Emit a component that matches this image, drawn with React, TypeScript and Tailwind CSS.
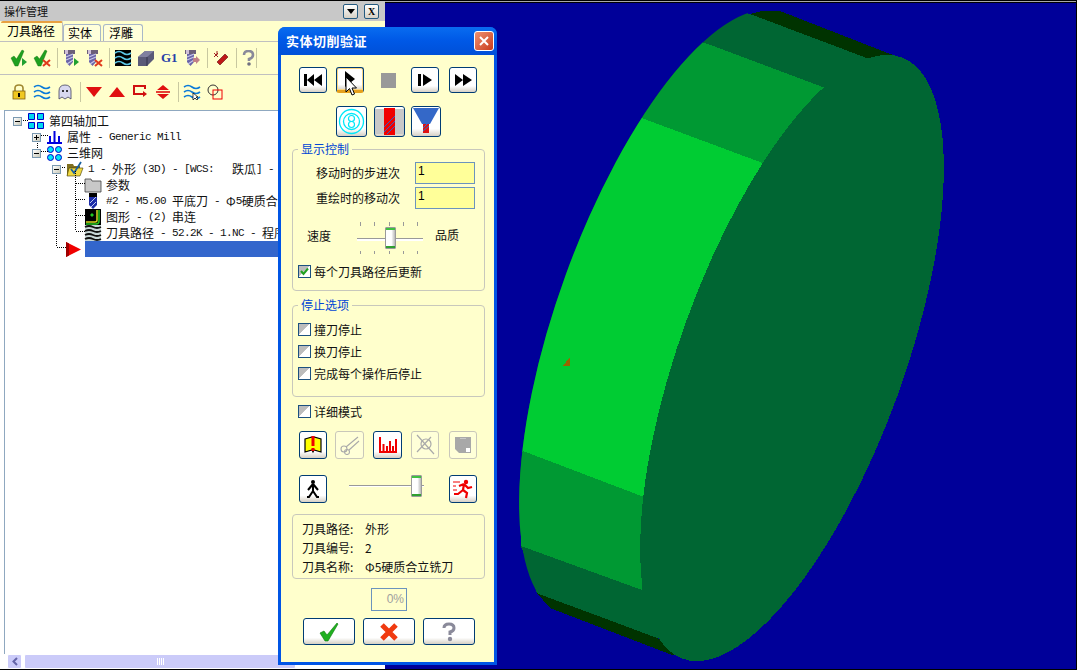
import React from "react";

const Mixed = ({ text }: { text: string }) => (
  <div className="flex whitespace-pre">
    {text.split(/([\x00-\x7f]+)/).map((part, i) =>
      /^[\x00-\x7f]+$/.test(part) ? (
        <div key={i} className="h-4 leading-4 font-['Liberation_Mono',monospace] text-[11px] tracking-[-0.6px]">{part}</div>
      ) : (
        <div key={i} className="h-4 leading-4">{part}</div>
      )
    )}
  </div>
);

const Ico = ({ children, className = "" }: { children: React.ReactNode; className?: string }) => (
  <svg viewBox="0 0 16 16" className={`w-4 h-4 shrink-0 overflow-visible ${className}`}>{children}</svg>
);

const Sep = () => <div className="w-px h-[20px] bg-[#c8c8a0] mr-[5px] shrink-0" />;

const Check = () => <path d="M0 8 L3 6 L5.5 9 L11 0 L13 1 L7 16 L4 16 Z" fill="#1fa01f" stroke="#0b6b0b" strokeWidth="0.4" />;
const RedX = ({ x = 9, y = 10 }: { x?: number; y?: number }) => (
  <path d={`M${x} ${y} l7 6 M${x + 7} ${y} l-7 6`} stroke="#e03a1c" strokeWidth="2" />
);
const Mill = () => (
  <g>
    <rect x="1" y="0" width="11" height="4" fill="#6b5f78" />
    <rect x="2" y="0" width="3" height="4" fill="#d0c0d8" />
    <path d="M3 4 H10 V12 L6.5 16 L3 12 Z" fill="#6a64a8" />
    <path d="M3 7 L10 4 M3 10 L10 7 M4 14 L10 10" stroke="#c8c8e8" strokeWidth="1.2" />
  </g>
);
const Waves = ({ color = "#0a7ad8" }: { color?: string }) => (
  <path d="M0 3 Q4 0 8 3 T16 3 M0 8 Q4 5 8 8 T16 8 M0 13 Q4 10 8 13 T16 13" stroke={color} strokeWidth="1.6" fill="none" />
);
const Cursor = ({ className }: { className?: string }) => (
  <svg viewBox="0 0 12 21" className={className}>
    <path d="M1 1 V16 L4.5 12.5 L7 19 L9.5 18 L7 12 H11.5 Z" fill="#fff" stroke="#000" strokeWidth="1" />
  </svg>
);

const Expander = ({ open }: { open: boolean }) => (
  <div className="w-[9px] h-[9px] shrink-0 border border-[#7a98b0] bg-linear-to-br from-white to-[#c8c8b8] relative flex items-center justify-center">
    <div className="w-[5px] h-px bg-black" />
    {!open && <div className="absolute w-px h-[5px] bg-black" />}
  </div>
);

const TreeRow = ({ pad, expander, icon, text }: { pad: string; expander?: "open" | "closed"; icon: React.ReactNode; text: string }) => (
  <div className={`h-4 flex items-center ${pad}`}>
    {expander && <Expander open={expander === "open"} />}
    {expander && <div className="w-[6px] shrink-0" />}
    {icon}
    <div className="ml-[5px] text-[12px] leading-4 text-[#111]"><Mixed text={text} /></div>
  </div>
);

const Btn = ({ className = "", children, disabled }: { className?: string; children?: React.ReactNode; disabled?: boolean }) => (
  <div
    className={`flex items-center justify-center rounded-[3px] shrink-0 border relative ${
      disabled
        ? "border-[#c9c7ba] bg-[#ffffd8]"
        : "border-[#003c74] bg-linear-to-b from-white from-75% to-[#d6d0c5]"
    } ${className}`}
  >
    {children}
  </div>
);

const CheckBox = ({ checked }: { checked?: boolean }) => (
  <div className="w-[13px] h-[13px] shrink-0 border border-[#1c5180] bg-linear-to-br from-[#bcbcbc] from-45% to-white to-50% flex items-center justify-center">
    {checked && (
      <svg viewBox="0 0 11 11" className="w-[11px] h-[11px]">
        <path d="M2 5 L4.5 8 L9 2.5" stroke="#21a121" strokeWidth="2" fill="none" />
      </svg>
    )}
  </div>
);

const Check2 = ({ label, className = "" }: { label: string; className?: string }) => (
  <div className={`flex items-center h-[13px] ${className}`}>
    <CheckBox checked={label.startsWith("每个")} />
    <span className="ml-[3px] text-[12px] text-[#111] whitespace-nowrap">{label}</span>
  </div>
);

const Thumb = ({ className = "" }: { className?: string }) => (
  <div className={`absolute w-[11px] h-[22px] rounded-[1px] border border-[#9a9a9a] bg-linear-to-r from-white from-60% to-[#b8b8b8] ${className}`}>
    <div className="h-[2px] bg-[#40c040]" />
    <div className="h-[2px] bg-[#30a030] absolute bottom-0 left-0 right-0" />
  </div>
);

const Group = ({ label, className = "", children }: { label?: string; className?: string; children: React.ReactNode }) => (
  <div className={`relative ml-[11px] w-[193px] rounded-[4px] border border-[#c8c8bc] shrink-0 ${className}`}>
    {label && (
      <span className="absolute -top-[7px] left-[5px] px-[3px] leading-3 text-[12px] text-[#0046d5] bg-[#ffffcc]">{label}</span>
    )}
    {children}
  </div>
);

const InfoRow = ({ k, v }: { k: string; v: string }) => (
  <div className="flex items-center h-[19px] text-[12px] text-[#111]">
    <span className="w-[63px] whitespace-nowrap">{k}</span>
    <span className="whitespace-nowrap">{v}</span>
  </div>
);

const Dialog = () => (
  <div className="absolute left-[278px] top-[27px] w-[219px] h-[638px] flex flex-col rounded-t-[7px] bg-[#0055e5] overflow-hidden">
    <div className="h-[28px] shrink-0 flex items-center pl-[8px] pr-[3px] bg-linear-to-b from-[#0a6cf0] via-[#0058e6] to-[#0050d8]">
      <span className="text-white font-bold text-[13px] tracking-[0.5px]">实体切削验证</span>
      <div className="ml-auto w-[20px] h-[20px] rounded-[3px] border border-white bg-linear-to-br from-[#ee9070] to-[#c83818] flex items-center justify-center">
        <svg viewBox="0 0 12 12" className="w-3 h-3"><path d="M2 2 L10 10 M10 2 L2 10" stroke="#fff" strokeWidth="2" /></svg>
      </div>
    </div>
    <div className="flex-1 mx-[3px] mb-[3px] bg-[#ffffcc] flex flex-col">
      <div className="flex items-center mt-[12px] pl-[18px] h-[26px] shrink-0">
        <Btn className="w-[28px] h-[26px]">
          <svg viewBox="0 0 18 12" className="w-[18px] h-3"><path d="M0 0 H3 V12 H0 Z M10 0 V12 L3 6 Z M18 0 V12 L10 6 Z" fill="#000" /></svg>
        </Btn>
        <Btn className="w-[28px] h-[26px] ml-[9px] border-b-[3px] border-b-[#e5a01c] shadow-[inset_0_0_0_1px_#fbd580]">
          <svg viewBox="0 0 12 16" className="w-3 h-4"><path d="M1 0 L11 8 L1 16 Z" fill="#000" /></svg>
          <Cursor className="absolute left-[8px] top-[8px] w-3 h-[21px]" />
        </Btn>
        <div className="w-[15px] h-[15px] bg-[#999] ml-[17px]" />
        <Btn className="w-[28px] h-[26px] ml-[15px]">
          <svg viewBox="0 0 14 12" className="w-[14px] h-3"><path d="M0 0 H3 V12 H0 Z M5 0 L14 6 L5 12 Z" fill="#000" /></svg>
        </Btn>
        <Btn className="w-[28px] h-[26px] ml-[10px]">
          <svg viewBox="0 0 17 12" className="w-[17px] h-3"><path d="M0 0 L8 6 L0 12 Z M8 0 L17 6 L8 12 Z" fill="#000" /></svg>
        </Btn>
      </div>
      <div className="flex items-center mt-[13px] pl-[55px] h-[31px] shrink-0">
        <Btn className="w-[31px] h-[31px]">
          <svg viewBox="0 0 27 27" className="w-[27px] h-[27px]">
            <circle cx="13.5" cy="13.5" r="12" fill="none" stroke="#00e8f8" strokeWidth="1.3" />
            <circle cx="13.5" cy="13.5" r="8" fill="none" stroke="#00e8f8" strokeWidth="1.3" />
            <circle cx="13.5" cy="10.5" r="3" fill="none" stroke="#00e8f8" strokeWidth="1.2" />
            <circle cx="13.5" cy="16.5" r="3" fill="none" stroke="#00e8f8" strokeWidth="1.2" />
          </svg>
        </Btn>
        <Btn className="w-[31px] h-[31px] ml-[7px] overflow-hidden">
          <svg viewBox="0 0 29 29" className="w-[29px] h-[29px]">
            <rect x="0" y="2" width="29" height="25" fill="#c8c8c8" />
            <rect x="9" y="1" width="11" height="27" fill="#f00000" />
            <path d="M9 20 L20 9 M9 25 L20 14 M12 27 L20 19" stroke="#3060c8" strokeWidth="1" />
          </svg>
        </Btn>
        <Btn className="w-[30px] h-[31px] ml-[6px]">
          <svg viewBox="0 0 28 29" className="w-[28px] h-[29px]">
            <path d="M1 1 H27 L18 17 H10 Z" fill="#3468c8" />
            <rect x="11" y="17" width="6" height="9" fill="#e01010" />
            <path d="M11 24 L17 19 M11 21 L15 17" stroke="#3468c8" strokeWidth="1" />
          </svg>
        </Btn>
      </div>
      <Group label="显示控制" className="mt-[12px] h-[142px]">
        <div className="flex items-center mt-[12px] h-[22px]">
          <span className="w-[122px] pl-[23px] text-[12px] text-[#111]">移动时的步进次</span>
          <div className="w-[60px] h-[22px] border border-[#6b93bd] bg-[#ffff99] pl-[2px] text-[12px] leading-4 font-['Liberation_Sans',sans-serif]">1</div>
        </div>
        <div className="flex items-center mt-[3px] h-[22px]">
          <span className="w-[122px] pl-[23px] text-[12px] text-[#111]">重绘时的移动次</span>
          <div className="w-[60px] h-[22px] border border-[#6b93bd] bg-[#ffff99] pl-[2px] text-[12px] leading-4 font-['Liberation_Sans',sans-serif]">1</div>
        </div>
        <div className="flex items-center mt-[13px] h-[32px]">
          <span className="ml-[14px] w-[50px] text-[12px] text-[#111] -mt-[5px]">速度</span>
          <div className="relative w-[66px] h-[32px] shrink-0">
            <div className="absolute left-[3px] right-0 top-0 flex justify-between pr-[5px]">
              {[0, 1, 2, 3, 4].map(i => <div key={i} className="w-px h-[4px] bg-[#999]" />)}
            </div>
            <div className="absolute left-[3px] right-0 bottom-0 flex justify-between pr-[5px]">
              {[0, 1, 2, 3, 4].map(i => <div key={i} className="w-px h-[3px] bg-[#999]" />)}
            </div>
            <div className="absolute left-0 right-0 top-[16px] h-[3px] border-t border-[#999] bg-white" />
            <Thumb className="left-[28px] top-[5px]" />
          </div>
          <span className="ml-[12px] text-[12px] text-[#111] -mt-[7px]">品质</span>
        </div>
        <Check2 label="每个刀具路径后更新" className="mt-[11px] ml-[5px]" />
      </Group>
      <Group label="停止选项" className="mt-[14px] h-[92px]">
        <div className="flex flex-col gap-[9px] pt-[17px] pl-[5px]">
          <Check2 label="撞刀停止" />
          <Check2 label="换刀停止" />
          <Check2 label="完成每个操作后停止" />
        </div>
      </Group>
      <Check2 label="详细模式" className="mt-[8px] ml-[17px]" />
      <div className="flex items-center mt-[13px] pl-[18px] h-[28px] shrink-0">
        <Btn className="w-[28px] h-[28px]">
          <svg viewBox="0 0 18 18" className="w-[18px] h-[18px]">
            <path d="M1 3 L8 1 L9 3 L10 1 L17 3 V16 L10 14 L9 16 L8 14 L1 16 Z" fill="#ffff00" stroke="#000" strokeWidth="1.2" />
            <path d="M9 0 V10 M9 12 V15" stroke="#f00000" strokeWidth="3" />
          </svg>
        </Btn>
        <Btn disabled className="w-[29px] h-[28px] ml-[8px]">
          <svg viewBox="0 0 22 20" className="w-[22px] h-5" fill="none" stroke="#aaa" strokeWidth="1.1">
            <circle cx="5" cy="14" r="3" /><circle cx="8" cy="17" r="2.5" />
            <path d="M7 12 L19 2 M10 15 L20 6" />
          </svg>
        </Btn>
        <Btn className="w-[29px] h-[28px] ml-[9px]">
          <svg viewBox="0 0 18 16" className="w-[18px] h-4">
            <path d="M1 0 V15 H18" stroke="#f00000" strokeWidth="2" fill="none" />
            <path d="M4.5 7 V15 M8 9 V15 M11 4 V15 M14 9 V15 M17 2 V15" stroke="#f00000" strokeWidth="2" />
          </svg>
        </Btn>
        <Btn disabled className="w-[28px] h-[28px] ml-[9px]">
          <svg viewBox="0 0 22 22" className="w-[22px] h-[22px]" fill="none" stroke="#aaa" strokeWidth="1.2">
            <circle cx="12" cy="10" r="5" /><path d="M3 1 L20 20 M17 3 L3 18" />
          </svg>
        </Btn>
        <Btn disabled className="w-[28px] h-[28px] ml-[10px]">
          <svg viewBox="0 0 16 16" className="w-4 h-4">
            <path d="M0 0 H16 V16 H4 L0 12 Z" fill="#a8a8a8" />
            <rect x="5" y="1" width="6" height="1" fill="#c8c8c8" />
            <rect x="11" y="11" width="4" height="4" fill="#fff" />
          </svg>
        </Btn>
      </div>
      <div className="flex items-center mt-[16px] pl-[18px] h-[28px] shrink-0">
        <Btn className="w-[28px] h-[28px]">
          <svg viewBox="0 0 16 20" className="w-4 h-5">
            <circle cx="8" cy="3" r="2" fill="#000" />
            <path d="M8 5 L3 11 M8 5 L13 11 M8 5 V12 L4 18 H2 M8 12 L12 18 H14" stroke="#000" strokeWidth="2" fill="none" />
          </svg>
        </Btn>
        <div className="relative w-[75px] h-[28px] ml-[22px] shrink-0">
          <div className="absolute left-0 right-0 top-[10px] h-[2px] border-t border-[#999] bg-white" />
          <Thumb className="left-[62px] top-0" />
        </div>
        <Btn className="w-[28px] h-[28px] ml-[25px]">
          <svg viewBox="0 0 22 20" className="w-[22px] h-5">
            <circle cx="14" cy="3" r="2.2" fill="#f00000" />
            <path d="M12 5 L7 7 M12 5 L16 9 L20 8 M12 5 L11 11 L6 15 L2 15 M11 11 L15 14 L14 19" stroke="#f00000" strokeWidth="2.2" fill="none" />
            <path d="M1 3 H8 M1 7 H4 M1 11 H5" stroke="#f00000" strokeWidth="1" />
          </svg>
        </Btn>
      </div>
      <Group className="mt-[11px] h-[65px]">
        <div className="pl-[9px] pt-[4px]">
          <InfoRow k="刀具路径:" v="外形" />
          <InfoRow k="刀具编号:" v="2" />
          <InfoRow k="刀具名称:" v="Φ5硬质合立铣刀" />
        </div>
      </Group>
      <div className="mt-[9px] ml-[90px] w-[36px] h-[23px] shrink-0 border border-[#6b93bd] text-right pr-[2px] text-[12px] leading-[21px] text-[#a0a0a0] font-['Liberation_Sans',sans-serif]">0%</div>
      <div className="flex items-center mt-[7px] ml-[22px] gap-[8px] h-[27px] shrink-0">
        <Btn className="w-[52px] h-[27px]">
          <svg viewBox="0 0 20 20" className="w-5 h-5">
            <path d="M1 11 L5 9 L8 13 L18 1 L19 2 L9 19 L6 19 Z" fill="#20b020" stroke="#0b7b0b" strokeWidth="0.6" />
          </svg>
        </Btn>
        <Btn className="w-[52px] h-[27px]">
          <svg viewBox="0 0 20 20" className="w-5 h-5"><path d="M3 3 L17 17 M17 3 L3 17" stroke="#f03a10" strokeWidth="5" /></svg>
        </Btn>
        <Btn className="w-[52px] h-[27px]">
          <svg viewBox="0 0 16 20" className="w-4 h-5">
            <path d="M3 6 Q3 2 8 2 Q13 2 13 6 Q13 9 9 10 V13" fill="none" stroke="#8a8a9a" strokeWidth="3" />
            <circle cx="9" cy="17" r="2.2" fill="#8a8a9a" />
          </svg>
        </Btn>
      </div>
    </div>
  </div>
);

const Canvas = () => (
  <div className="flex-1 flex flex-col min-w-0">
    <div className="h-px bg-[#a8a8a8] shrink-0" />
    <div className="h-px bg-black shrink-0" />
    <div className="flex-1 bg-[#000099] min-h-0">
      <svg viewBox="385 3 691 666" className="w-full h-full block" shapeRendering="crispEdges">
        <defs>
          <clipPath id="backDisk">
            <ellipse cx="671" cy="313" rx="320" ry="112" transform="rotate(-70 671 313)" />
          </clipPath>
        </defs>
        <polygon points="750,14 762,11 780,11 898,57 880,60 872,60" fill="#003300" />
        <polygon points="537,593 550,608 672,655 690,655 657,638" fill="#003300" />
        {/* rim: base colour, then the three lit facets */}
        <g clipPath="url(#backDisk)">
          <polygon points="872,60 508,-76 295,503 657,638" fill="#006633" />
          <polygon points="828,89 586,-1 526,75 768,165" fill="#009933" />
          <polygon points="768,165 526,75 402,407 644,497" fill="#00cc33" />
          <polygon points="644,497 402,407 400,500 642,590" fill="#009933" />
        </g>
        <polygon points="750,14 872,60 880,90 670,640 657,638 537,593 521,546 523,451 647,120 708,44" fill="#006633" />
        <polygon points="828,89 708,44 647,120 768,165" fill="#009933" />
        <polygon points="768,165 647,120 523,451 644,497" fill="#00cc33" />
        <polygon points="644,497 523,451 521,546 642,590" fill="#009933" />
        <ellipse cx="792" cy="358" rx="320" ry="112" transform="rotate(-70 792 358)" fill="#006633" />
        <polygon points="563,366 570,357 570,366" fill="#996600" />
      </svg>
    </div>
  </div>
);

export default function App() {
  return (
    <div className="w-[1077px] h-[670px] relative flex flex-col bg-black overflow-hidden pt-px pb-px pr-px font-['Noto_Sans_CJK_SC','Noto_Sans',sans-serif]">
      <div className="flex-1 flex min-h-0">
        <div className="w-[385px] shrink-0 flex flex-col bg-white">
          {/* panel title */}
          <div className="h-[20px] shrink-0 bg-[#c8c8c8] flex items-center pl-[4px] pt-[1px]">
            <span className="text-[11px] text-[#111]">操作管理</span>
            <div className="ml-auto flex gap-[6px] pr-[6px]">
              <div className="w-[15px] h-[15px] rounded-[2px] border border-[#245a80] bg-linear-to-b from-white to-[#d6d0c5] flex items-center justify-center">
                <svg viewBox="0 0 8 5" className="w-2 h-[5px]"><path d="M0 0 H8 L4 5 Z" fill="#000" /></svg>
              </div>
              <div className="w-[15px] h-[15px] rounded-[2px] border border-[#245a80] bg-linear-to-b from-white to-[#d6d0c5] flex items-center justify-center font-['Liberation_Serif',serif] font-bold text-[10px] leading-none">X</div>
            </div>
          </div>
          {/* tabs */}
          <div className="h-[21px] shrink-0 bg-[#ffffcc] flex items-end pl-px border-b border-[#c0c0c0]">
            <div className="w-[62px] h-[20px] border-t-2 border-[#e8a040] bg-[#ffffcc] text-[12px] leading-4 pl-[6px] rounded-t-[2px] border-r border-r-[#c0c0c0]">刀具路径</div>
            <div className="w-[38px] h-[17px] border border-b-0 border-[#a8b8c8] rounded-t-[3px] text-[12px] leading-4 pl-[4px] bg-white/30">实体</div>
            <div className="w-[40px] h-[17px] ml-[2px] border border-b-0 border-[#a8b8c8] rounded-t-[3px] text-[12px] leading-4 pl-[5px] bg-white/30">浮雕</div>
          </div>
          {/* toolbar row 1 */}
          <div className="h-[33px] shrink-0 bg-[#ffffcc] border-b border-[#c0c0c0] flex items-center pl-[11px]">
            <Ico className="mr-[7px]"><Check /><path d="M11 8 L16 12 L11 16 Z" fill="#20a030" /></Ico>
            <Ico className="mr-[7px]"><Check /><RedX /></Ico>
            <Sep />
            <Ico className="mr-[7px]"><Mill /><path d="M11 8 L16 12 L11 16 Z" fill="#20a030" /></Ico>
            <Ico className="mr-[7px]"><Mill /><RedX /></Ico>
            <Sep />
            <Ico className="mr-[7px]">
              <rect width="16" height="16" fill="#000" />
              <path d="M0 3 Q4 0 8 3 T16 3 M0 8 Q4 5 8 8 T16 8 M0 13 Q4 10 8 13 T16 13" stroke="#5cc8e8" strokeWidth="1.6" fill="none" />
            </Ico>
            <Ico className="mr-[7px]">
              <path d="M0 7 L7 1 H16 V9 L9 16 H0 Z" fill="#5a5a78" />
              <path d="M0 7 L7 1 H16 L9 7 Z" fill="#8080a0" />
              <path d="M9 7 V16" stroke="#303048" strokeWidth="1" />
            </Ico>
            <span className="w-4 mr-[7px] shrink-0 font-['Liberation_Serif',serif] font-bold text-[13px] leading-4 text-[#2840a8]">G1</span>
            <Ico className="mr-[7px]"><Mill /><path d="M9 8 H12 V6 L16 10 L12 14 V12 H9 Z" fill="#c08088" /></Ico>
            <Sep />
            <Ico className="mr-[7px]">
              <path d="M4 12 L12 4 L15 7 L7 15 Z" fill="#c01818" stroke="#601010" strokeWidth="0.6" />
              <path d="M1 3 L5 7 M5 3 L1 7 M4 1 V5" stroke="#a02020" strokeWidth="1" />
            </Ico>
            <Sep />
            <svg viewBox="0 0 13 16" className="w-[13px] h-4 shrink-0 mr-px">
              <path d="M2 5 Q2 1 6.5 1 Q11 1 11 5 Q11 8 7 9 V11" fill="none" stroke="#8a8a9a" strokeWidth="2.6" />
              <circle cx="7" cy="14" r="1.8" fill="#707080" />
            </svg>
            <div className="w-px h-[20px] bg-[#c8c8a0]" />
          </div>
          {/* toolbar row 2 */}
          <div className="h-[35px] shrink-0 bg-[#ffffcc] flex items-center pl-[11px] pb-[1px]">
            <Ico className="mr-[7px]">
              <path d="M4 7 V4 Q4 1 8 1 Q12 1 12 4 V7" fill="none" stroke="#a08830" strokeWidth="1.6" />
              <rect x="2" y="7" width="12" height="8" fill="#f0c820" stroke="#806010" strokeWidth="0.8" />
              <rect x="7" y="9" width="2" height="4" fill="#000" />
            </Ico>
            <Ico className="mr-[7px]"><Waves /></Ico>
            <Ico className="mr-[7px]">
              <path d="M2 15 V7 Q2 1 8 1 Q14 1 14 7 V15 L11 13 L8 15 L5 13 Z" fill="#d8d8f0" stroke="#404060" strokeWidth="0.8" />
              <circle cx="6" cy="7" r="1" fill="#000" /><circle cx="10" cy="7" r="1" fill="#000" />
            </Ico>
            <Sep />
            <Ico className="mr-[7px]"><path d="M0 3 H16 L8 13 Z" fill="#e01010" /></Ico>
            <Ico className="mr-[7px]"><path d="M0 13 H16 L8 3 Z" fill="#e01010" /></Ico>
            <Ico className="mr-[7px]">
              <path d="M2 2 V10 H13 M1 2 H13 V5" stroke="#d01010" strokeWidth="2" fill="none" />
              <path d="M11 7 L15 10 L11 13 Z" fill="#d01010" />
            </Ico>
            <Ico className="mr-[7px]">
              <path d="M2 6 H14 L8 1 Z M2 10 H14 L8 15 Z" fill="#e01010" />
              <rect x="1" y="7.2" width="14" height="1.6" fill="#e01010" />
            </Ico>
            <Sep />
            <Ico className="mr-[7px]">
              <Waves />
              <path d="M9 9 V16 L11 14 L13 16 L14 15 L12 13 H14 Z" fill="#fff" stroke="#000" strokeWidth="0.7" />
            </Ico>
            <Ico>
              <circle cx="6" cy="6" r="5" fill="none" stroke="#333" strokeWidth="1" />
              <rect x="6" y="6" width="9" height="9" fill="none" stroke="#f00000" strokeWidth="1" />
            </Ico>
          </div>
          {/* tree */}
          <div className="flex-1 min-h-0 ml-[4px] relative border-l border-t border-[#8fa8c0] bg-white pt-[2px] overflow-hidden">
            <svg className="absolute inset-0 w-full h-full pointer-events-none" stroke="#000" strokeDasharray="1 1" fill="none" shapeRendering="crispEdges">
              <path d="M17.5 9 H23 M36 24 H43 M36 40 H43 M32.5 32 V40 M55 56 H61 M51.5 60 V136 M51.5 136 H61 M70.5 60 V120 M70.5 72 H80 M70.5 88 H80 M70.5 104 H80 M70.5 120 H80" />
            </svg>
            <TreeRow pad="pl-[8px]" expander="open" text="第四轴加工" icon={
              <svg viewBox="0 0 16 16" className="w-4 h-4 shrink-0">
                <path d="M0.5 0.5 H6.5 V6.5 H0.5 Z M9.5 0.5 H15.5 V6.5 H9.5 Z M0.5 9.5 H6.5 V15.5 H0.5 Z M9.5 9.5 H15.5 V15.5 H9.5 Z" fill="#00d8f0" stroke="#0000c8" strokeWidth="1" />
              </svg>
            } />
            <TreeRow pad="pl-[27px]" expander="closed" text="属性 - Generic Mill" icon={
              <svg viewBox="0 0 15 14" className="w-[15px] h-[14px] shrink-0">
                <path d="M0 13 H15 M3 13 V6 M7.5 13 V1 M12 13 V6" stroke="#0000e0" strokeWidth="2" />
              </svg>
            } />
            <TreeRow pad="pl-[27px]" expander="open" text="三维网" icon={
              <svg viewBox="0 0 15 15" className="w-[15px] h-[15px] shrink-0" fill="#00e8f8" stroke="#0000c8">
                <circle cx="3.5" cy="3.5" r="3" /><circle cx="11.5" cy="3.5" r="3" />
                <circle cx="3.5" cy="11.5" r="3" /><circle cx="11.5" cy="11.5" r="3" />
              </svg>
            } />
            <TreeRow pad="pl-[47px]" expander="open" text="1 - 外形 (3D) - [WCS:   跌瓜] - " icon={
              <Ico>
                <path d="M0 3 H6 L7 5 H13 V15 H0 Z" fill="#807020" />
                <path d="M2 7 H16 L13 15 H0 Z" fill="#f0d840" stroke="#403800" strokeWidth="0.6" />
                <path d="M4 8 L7 12 L14 1" stroke="#1860a0" strokeWidth="1.8" fill="none" />
              </Ico>
            } />
            <TreeRow pad="pl-[80px]" text="参数" icon={
              <Ico>
                <path d="M0 2 H6 L7 4 H16 V15 H0 Z" fill="#c8c8c8" stroke="#404040" strokeWidth="0.8" />
              </Ico>
            } />
            <TreeRow pad="pl-[80px]" text="#2 - M5.00 平底刀 - Φ5硬质合立铣刀" icon={
              <Ico>
                <rect x="4" y="0" width="8" height="4" fill="#000" />
                <path d="M4 4 H12 V12 L8 16 L4 12 Z" fill="#1c2ca8" />
                <path d="M5 10 L11 4 M6 14 L11 9" stroke="#c0c8f0" strokeWidth="1" />
              </Ico>
            } />
            <TreeRow pad="pl-[80px]" text="图形 - (2) 串连" icon={
              <Ico>
                <rect width="16" height="16" fill="#000" />
                <path d="M12 1 V11 Q12 13 10 13 H1" stroke="#d8d820" strokeWidth="1.5" fill="none" />
                <path d="M14 1 V12 Q14 15 11 15 H1" stroke="#20c820" strokeWidth="1.5" fill="none" />
                <path d="M5 6 L7 4 L9 6 L7 8 Z" fill="#20c820" />
              </Ico>
            } />
            <TreeRow pad="pl-[80px]" text="刀具路径 - 52.2K - 1.NC - 程序" icon={
              <Ico>
                <rect width="16" height="16" fill="#c8d8d8" />
                <path d="M0 2 Q4 0 8 2 T16 2 M0 6 Q4 4 8 6 T16 6 M0 10 Q4 8 8 10 T16 10 M0 14 Q4 12 8 14 T16 14" stroke="#101010" strokeWidth="1.8" fill="none" />
              </Ico>
            } />
            <div className="h-4 flex items-center pl-[61px]">
              <svg viewBox="0 0 15 15" className="w-[15px] h-[15px] shrink-0">
                <path d="M0 0 L15 7.5 L0 15 Z" fill="#f00000" />
                <path d="M0 0 L3 1.5 V13.5 L0 15 Z" fill="#a00000" />
              </svg>
              <div className="ml-[4px] h-4 flex-1 bg-[#3366cc]" />
            </div>
          </div>
          {/* scrollbar */}
          <div className="h-[15px] shrink-0 bg-white flex pl-[7px] items-stretch">
            <div className="w-[15px] bg-[#cbcbf9] border border-white rounded-[2px] flex items-center justify-center">
              <svg viewBox="0 0 6 9" className="w-[6px] h-[9px]"><path d="M5 1 L1.5 4.5 L5 8" stroke="#6464a8" strokeWidth="2" fill="none" /></svg>
            </div>
            <div className="w-[272px] ml-[2px] bg-[#cbcbf9] rounded-[2px] border border-white flex items-center justify-center gap-px">
              {[0, 1, 2, 3].map(i => <div key={i} className="w-px h-[7px] bg-white" />)}
            </div>
          </div>
        </div>
        <Canvas />
      </div>
      <Dialog />
    </div>
  );
}
